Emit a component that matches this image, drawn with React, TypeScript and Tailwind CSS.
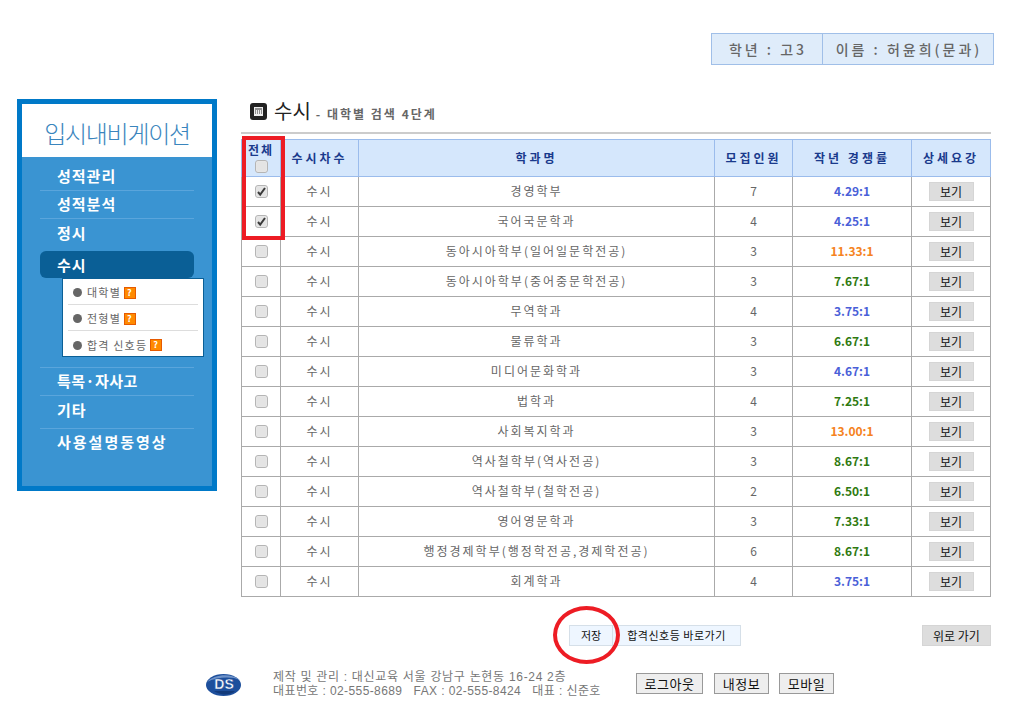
const rows = [
  { name: "경영학부", n: 7, rate: "4.29:1", c: "text-[#4a5fd8]", on: true },
  { name: "국어국문학과", n: 4, rate: "4.25:1", c: "text-[#4a5fd8]", on: true },
  { name: "동아시아학부(일어일문학전공)", n: 3, rate: "11.33:1", c: "text-[#f58220]" },
  { name: "동아시아학부(중어중문학전공)", n: 3, rate: "7.67:1", c: "text-[#2f7a10]" },
  { name: "무역학과", n: 4, rate: "3.75:1", c: "text-[#4a5fd8]" },
  { name: "물류학과", n: 3, rate: "6.67:1", c: "text-[#2f7a10]" },
  { name: "미디어문화학과", n: 3, rate: "4.67:1", c: "text-[#4a5fd8]" },
  { name: "법학과", n: 4, rate: "7.25:1", c: "text-[#2f7a10]" },
  { name: "사회복지학과", n: 3, rate: "13.00:1", c: "text-[#f58220]" },
  { name: "역사철학부(역사전공)", n: 3, rate: "8.67:1", c: "text-[#2f7a10]" },
  { name: "역사철학부(철학전공)", n: 2, rate: "6.50:1", c: "text-[#2f7a10]" },
  { name: "영어영문학과", n: 3, rate: "7.33:1", c: "text-[#2f7a10]" },
  { name: "행정경제학부(행정학전공,경제학전공)", n: 6, rate: "8.67:1", c: "text-[#2f7a10]" },
  { name: "회계학과", n: 4, rate: "3.75:1", c: "text-[#4a5fd8]" },
];

const Check = ({ on }: { on?: boolean }) => (
  <span className="relative mx-auto block h-[13px] w-[13px]">
    <input
      type="checkbox"
      defaultChecked={on}
      className="block h-[13px] w-[13px] appearance-none rounded-[3px] border border-[#b5b5b5] bg-[#e4e4e4] shadow-[inset_0_0_1px_#ffffff]"
    />
    {on && (
      <svg viewBox="0 0 13 13" className="pointer-events-none absolute inset-0 h-[13px] w-[13px]">
        <path d="M3 7l2.2 2.6L10 3" fill="none" stroke="#3a3a3a" strokeWidth="2" />
      </svg>
    )}
  </span>
);

const Help = () => (
  <span className="ml-[4px] inline-block h-[10px] w-[10px] bg-[#ff8a00] text-center align-[2px] text-[9px] leading-[10px] font-bold text-white outline outline-1 outline-[#e65a00]">
    ?
  </span>
);

const SideLink = ({ label, cls }: { label: string; cls: string }) => (
  <div className={`border-t border-[#5aa5dc] pl-[17px] text-[15px] font-bold text-white ${cls}`}>{label}</div>
);

const SubLink = ({ label, last }: { label: string; last?: boolean }) => (
  <div className={`mx-[5px] flex h-[26px] items-center pt-[2px] pl-[5px] text-[11px] tracking-[1.2px] text-[#666666] ${last ? "" : "border-b border-[#dddddd]"}`}>
    <span className="mr-[5px] h-[9px] w-[9px] rounded-full bg-[#666666]" />
    {label}
    <Help />
  </div>
);

export default function App() {
  return (
    <div className="relative h-[724px] w-[1022px] overflow-hidden bg-white font-['Noto_Sans_CJK_KR','Liberation_Sans',sans-serif] text-[12px] text-[#666666]">
      <div className="flex justify-end pt-[33px] pr-[28px]">
        <div className="flex h-[32px] border border-[#a0bfe8] bg-[#dfecfa] text-[14px] leading-[30px] font-medium tracking-[3px] text-[#666666]">
          <div className="w-[111px] border-r border-[#a0bfe8] pl-[2px] text-center">학년 : 고3</div>
          <div className="w-[170px] pl-[2px] text-center">이름 : 허윤희(문과)</div>
        </div>
      </div>

      <div className="mt-[34px] flex pl-[17px]">
        <aside className="h-[392px] w-[200px] border-[5px] border-[#0079c8] bg-[#3a94d2]">
          <div className="h-[53px] bg-white pt-[12px] text-center text-[24px] leading-[34px] font-light tracking-[-1.3px] text-[#3a85bd]">
            입시내비게이션
          </div>
          <div className="mx-[18px] pt-[6px]">
            <div className="h-[27px] pl-[17px] text-[15px] leading-[26px] font-bold tracking-[1px] text-white">성적관리</div>
            <SideLink label="성적분석" cls="h-[28px] leading-[26px] tracking-[1px]" />
            <SideLink label="정시" cls="h-[33px] leading-[27px] tracking-[1px]" />
            <div className="h-[27px] rounded-[6px] bg-[#0a5f96] pl-[17px] text-[15px] leading-[27px] font-bold tracking-[1px] text-white">수시</div>
            <div className="relative z-10 ml-[22px] h-[79px] w-[142px] border border-[#0a5f96] bg-white">
              <SubLink label="대학별" />
              <SubLink label="전형별" />
              <SubLink label="합격 신호등" last />
            </div>
            <div className="mt-[10px]">
              <SideLink label="특목·자사고" cls="h-[28px] leading-[26px] tracking-[0.5px]" />
              <SideLink label="기타" cls="h-[33px] leading-[28px] tracking-[1px]" />
              <SideLink label="사용설명동영상" cls="h-[28px] leading-[26px] tracking-[2px]" />
            </div>
          </div>
        </aside>

        <main className="ml-[24px] w-[750px]">
          <div className="flex h-[35px] items-start border-b-2 border-[#cccccc]">
            <div className="mt-[4px] ml-[9px] flex h-[17px] w-[17px] items-center justify-center rounded-[3px] bg-[#222222]">
              <svg viewBox="0 0 11 11" className="h-[11px] w-[11px]">
                <rect x="1" y="1" width="9" height="9" fill="#eeeeee" />
                <path d="M2 3h7M2 5h1M4 5h1M6 5h1M8 5h1M2 7h1M4 7h1M6 7h1M8 7h1" stroke="#333" />
              </svg>
            </div>
            <span className="ml-[7px] text-[20px] leading-[24px] text-[#222222]">수시</span>
            <span className="mt-[7px] ml-[5px] text-[12px] leading-[16px] font-bold tracking-[2px] text-[#666666]">- 대학별 검색 4단계</span>
          </div>

          <table className="mt-[5px] w-[749px] table-fixed border-collapse text-center">
            <colgroup>
              <col className="w-[39px]" />
              <col className="w-[78px]" />
              <col className="w-[356px]" />
              <col className="w-[78px]" />
              <col className="w-[119px]" />
              <col className="w-[79px]" />
            </colgroup>
            <thead>
              <tr className="h-[37px] bg-[#d5e7fc] text-[12px] font-bold tracking-[3px] text-[#1a3a8c]">
                <th className="border border-[#9bbcec] p-0 leading-[14px] tracking-[2px]">
                  전체
                  <div className="mt-[3px]"><Check /></div>
                </th>
                <th className="border border-[#9bbcec] p-0">수시차수</th>
                <th className="border border-[#9bbcec] p-0">학과명</th>
                <th className="border border-[#9bbcec] p-0">모집인원</th>
                <th className="border border-[#9bbcec] p-0">작년 경쟁률</th>
                <th className="border border-[#9bbcec] p-0">상세요강</th>
              </tr>
            </thead>
            <tbody>
              {rows.map((r) => (
                <tr key={r.name} className="h-[30px] tracking-[2px]">
                  <td className="border border-[#aaaaaa] p-0"><Check on={r.on} /></td>
                  <td className="border border-[#aaaaaa] p-0 pb-[2px]">수시</td>
                  <td className="border border-[#aaaaaa] p-0 pb-[2px]">{r.name}</td>
                  <td className="border border-[#aaaaaa] p-0 pb-[2px] tracking-normal">{r.n}</td>
                  <td className={`border border-[#aaaaaa] p-0 pb-[2px] font-bold tracking-normal ${r.c}`}>{r.rate}</td>
                  <td className="border border-[#aaaaaa] p-0 tracking-normal">
                    <button className="h-[19px] w-[45px] border border-[#d5d5d5] bg-[#dddddd] text-[12px] leading-[17px] text-[#111111]">보기</button>
                  </td>
                </tr>
              ))}
            </tbody>
          </table>

          <div className="mt-[28px] flex text-[11px] leading-[19px] text-[#111111]">
            <button className="ml-[328px] h-[21px] w-[44px] border border-[#d5dfe8] bg-[#eef6ff]">저장</button>
            <button className="h-[21px] w-[128px] border border-l-0 border-[#d5dfe8] bg-[#eef6ff] tracking-[0.5px]">합격신호등 바로가기</button>
            <button className="ml-[181px] h-[21px] w-[69px] border border-[#d5d5d5] bg-[#dddddd] text-[12px]">위로 가기</button>
          </div>
        </main>
      </div>

      <div className="mt-[24px] flex items-start pl-[206px]">
        <svg viewBox="0 0 35 24" className="mt-[3px] h-[24px] w-[35px]">
          <ellipse cx="17.5" cy="12" rx="17.5" ry="11" fill="#1d4f9c" />
          <path d="M1 9C8 1 26 0 34 7 26 3 10 4 1 9z" fill="#6f93c9" />
          <path d="M8 18h21c-4 4-14 5-21 0z" fill="#123a7a" />
          <text x="18" y="16" textAnchor="middle" fontSize="14" fontWeight="700" fill="#ffffff" stroke="#1d4f9c" strokeWidth="0.4" fontFamily="Liberation Sans">DS</text>
        </svg>
        <div className="ml-[32px] font-['Liberation_Sans','Noto_Sans_CJK_KR',sans-serif] text-[12px] leading-[14px] text-[#777777]">
          <div className="tracking-[0.7px]">제작 및 관리 : 대신교육 서울 강남구 논현동 16-24 2층</div>
          <div className="tracking-[0.4px]">대표번호 : 02-555-8689 &nbsp; FAX : 02-555-8424 &nbsp; 대표 : 신준호</div>
        </div>
        <div className="absolute top-[673px] left-[636px] flex text-[13px] leading-[19px] text-[#111111]">
          <button className="h-[21px] w-[67px] border border-[#999999] bg-[#eeeeee] tracking-[0.5px]">로그아웃</button>
          <button className="ml-[11px] h-[21px] w-[55px] border border-[#999999] bg-[#eeeeee] tracking-[0.5px]">내정보</button>
          <button className="ml-[10px] h-[21px] w-[55px] border border-[#999999] bg-[#eeeeee] tracking-[0.5px]">모바일</button>
        </div>
      </div>

      {/* 빨간 표시 */}
      <div className="pointer-events-none absolute top-[136px] left-[242px] h-[104px] w-[43px] border-[4px] border-[#ed1c24]" />
      <div className="pointer-events-none absolute top-[606px] left-[553px] h-[58px] w-[67px] rounded-[50%] border-[4px] border-[#ed1c24]" />
    </div>
  );
}
